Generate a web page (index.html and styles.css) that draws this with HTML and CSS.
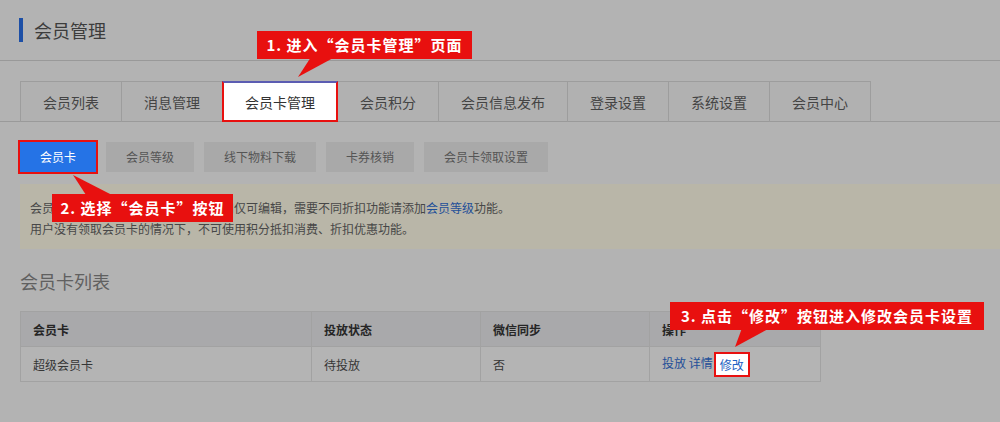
FILE: index.html
```html
<!DOCTYPE html>
<html lang="zh-CN">
<head>
<meta charset="utf-8">
<title>会员管理</title>
<link rel="stylesheet" href="styles.css">
</head>
<body>
<div class="page">
  <header class="page-head">
    <span class="head-bar"></span>
    <h1 class="head-title">会员管理</h1>
  </header>

  <nav class="tabs">
    <a class="tab">会员列表</a>
    <a class="tab">消息管理</a>
    <a class="tab tab-active">会员卡管理</a>
    <a class="tab">会员积分</a>
    <a class="tab">会员信息发布</a>
    <a class="tab">登录设置</a>
    <a class="tab">系统设置</a>
    <a class="tab tab-last">会员中心</a>
  </nav>

  <div class="subnav">
    <a class="sub-btn sub-active">会员卡</a>
    <a class="sub-btn">会员等级</a>
    <a class="sub-btn">线下物料下载</a>
    <a class="sub-btn">卡券核销</a>
    <a class="sub-btn">会员卡领取设置</a>
  </div>

  <div class="notice">
    <p>会员卡为店铺默认会员卡，名称和折扣仅可编辑，需要不同折扣功能请添加<a class="link">会员等级</a>功能。</p>
    <p>用户没有领取会员卡的情况下，不可使用积分抵扣消费、折扣优惠功能。</p>
  </div>

  <h2 class="section-title">会员卡列表</h2>

  <table class="grid">
    <colgroup>
      <col class="c-name"><col class="c-state"><col class="c-sync"><col class="c-op">
    </colgroup>
    <thead>
      <tr><th>会员卡</th><th>投放状态</th><th>微信同步</th><th>操作</th></tr>
    </thead>
    <tbody>
      <tr>
        <td>超级会员卡</td>
        <td>待投放</td>
        <td>否</td>
        <td class="ops"><a class="link">投放</a> <a class="link">详情</a><a class="link link-hl">修改</a></td>
      </tr>
    </tbody>
  </table>

  <div class="callout callout-1">1. 进入“会员卡管理”页面</div>
  <div class="callout callout-2">2. 选择“会员卡”按钮</div>
  <div class="callout callout-3">3. 点击“修改”按钮进入修改会员卡设置</div>

  <svg class="pointers" width="1000" height="422" viewBox="0 0 1000 422">
    <polygon points="311,57 335,57 298,77" fill="#e8100f"/>
    <polygon points="86,195 112,195 73,175" fill="#e8100f"/>
    <polygon points="742,328 770,328 735,347" fill="#e8100f"/>
  </svg>
</div>
</body>
</html>
```

FILE: styles.css
```css
* { box-sizing: border-box; }

html, body {
  margin: 0;
  padding: 0;
  background: #b3b3b3;
}

body {
  font-family: "Noto Sans CJK SC", "Noto Sans", sans-serif;
  color: #3a3a3a;
  width: 1000px;
  height: 422px;
  overflow: hidden;
}

.page {
  position: relative;
  width: 1000px;
  height: 422px;
}

/* header */
.page-head {
  display: flex;
  align-items: center;
  height: 61px;
  padding-left: 19px;
  border-bottom: 1px solid #999;
}
.head-bar {
  width: 4px;
  height: 24px;
  background: #1d4fa6;
  margin-right: 11px;
}
.head-title {
  margin: 0;
  font-size: 18px;
  font-weight: 400;
  color: #3c3c3c;
  line-height: 24px;
}

/* tabs */
.tabs {
  display: flex;
  margin-top: 20px;
  padding-left: 20px;
  border-bottom: 1px solid #9a9a9a;
}
.tab {
  display: block;
  height: 41px;
  line-height: 40px;
  padding: 0 22px;
  font-size: 14px;
  color: #444;
  background: #b1b1b1;
  border-top: 1px solid #9d9d9d;
  border-left: 1px solid #9d9d9d;
  margin-bottom: -1px;
  border-bottom: 1px solid #9a9a9a;
}
.tab-last { border-right: 1px solid #9d9d9d; }
.tab-active {
  position: relative;
  background: #fff;
  color: #333;
  border-bottom-color: #fff;
}
.tab-active::after {
  content: "";
  position: absolute;
  left: -1px;
  right: -1px;
  top: -1px;
  bottom: -1px;
  border: 2px solid #e8100f;
  border-top-color: #5b5cb2;
}

/* sub nav */
.subnav {
  display: flex;
  gap: 10px;
  margin-top: 20px;
  padding-left: 20px;
}
.sub-btn {
  display: block;
  height: 30px;
  line-height: 30px;
  padding: 0 20px;
  font-size: 12px;
  color: #555;
  background: #a9a9a9;
}
.sub-active {
  background: #2573e6;
  color: #fff;
  outline: 2px solid #e8100f;
}

/* notice */
.notice {
  margin: 12px 0 0 20px;
  padding: 13px 10px 10px;
  background: #b9b6a8;
  font-size: 12px;
  line-height: 21px;
  color: #474747;
}
.notice p { margin: 0; }

.link { color: #1f4f98; text-decoration: none; }

/* section */
.section-title {
  margin: 20px 0 0 20px;
  font-size: 18px;
  font-weight: 400;
  line-height: 24px;
  color: #606060;
}

/* table */
.grid {
  margin: 18px 0 0 20px;
  width: 800px;
  border-collapse: collapse;
  table-layout: fixed;
  font-size: 12px;
}
.c-name { width: 291px; }
.c-state { width: 169px; }
.c-sync { width: 169px; }
.c-op { width: 171px; }
.grid th, .grid td {
  height: 35px;
  padding: 0 12px;
  text-align: left;
  border: 1px solid #a2a2a2;
}
.grid th {
  background: #a9a9ab;
  color: #252525;
  font-weight: 700;
}
.grid td {
  background: #b4b4b4;
  color: #363636;
}
.ops .link { color: #1f4f98; }
.link-hl {
  display: inline-block;
  margin-left: 1px;
  padding: 0 4px;
  height: 25px;
  line-height: 21px;
  background: #fff;
  color: #1e5fc2 !important;
  border: 2px solid #e8100f;
  vertical-align: middle;
}

/* callouts */
.callout {
  position: absolute;
  background: #e8100f;
  color: #fff;
  font-size: 15px;
  font-weight: 700;
  letter-spacing: 1px;
  line-height: 28px;
  height: 28px;
  padding: 0;
  text-align: center;
  white-space: nowrap;
}
.callout-1 { left: 257px; top: 31px; width: 215px; }
.callout-2 { left: 52px; top: 194px; width: 181px; }
.callout-3 { left: 670px; top: 302px; width: 314px; }

.pointers {
  position: absolute;
  left: 0;
  top: 0;
  pointer-events: none;
}
```
